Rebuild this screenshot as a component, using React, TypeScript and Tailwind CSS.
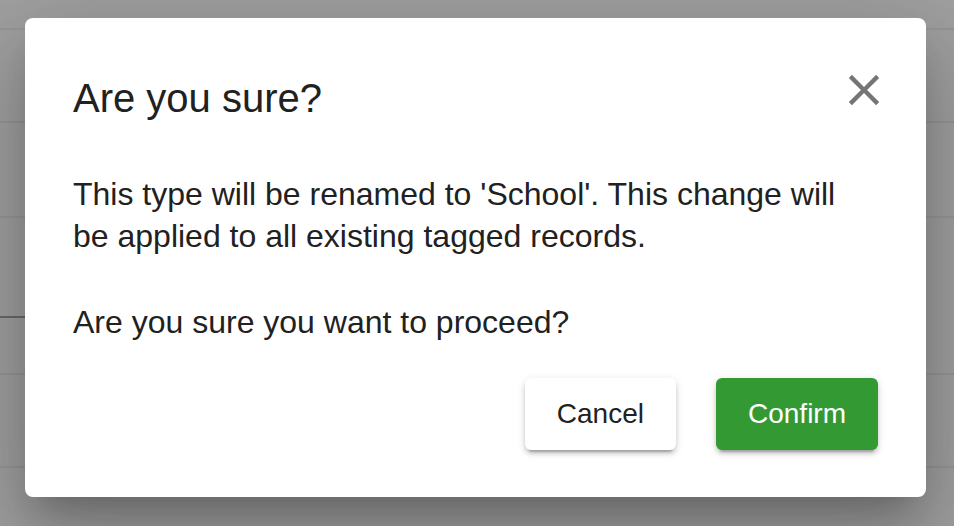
import React from 'react';

const CloseIcon: React.FC = () => (
  <svg viewBox="0 0 24 24" className="h-[52px] w-[52px]" fill="#757575">
    <path d="M19 6.41L17.59 5 12 10.59 6.41 5 5 6.41 10.59 12 5 17.59 6.41 19 12 13.41 17.59 19 19 17.59 13.41 12z" />
  </svg>
);

export default function App() {
  return (
    <div className="relative h-[526px] w-[954px] overflow-hidden bg-[#a0a0a0] font-['Liberation_Sans',Arial,sans-serif]">
      {/* page underneath the backdrop */}
      <div className="flex flex-col">
        <div className="h-[30px] border-b-2 border-[#979797]" />
        <div className="h-[93px] border-b-2 border-[#979797]" />
        <div className="h-[95px] border-b-2 border-[#979797]" />
        <div className="flex h-[100px] items-end">
          <div className="w-[200px] border-b-2 border-[#6a6a6a]" />
        </div>
        <div className="h-[57px] border-b-2 border-[#979797]" />
        <div className="h-[93px] border-b-2 border-[#979797]" />
      </div>

      {/* Dialog */}
      <div className="absolute inset-0 pl-[25px] pt-[18px]">
        <div className="w-[901px] rounded-[8px] bg-white px-[48px] pb-[47px] pt-[48px] text-[#212121] shadow-[0_22px_30px_-14px_rgba(0,0,0,0.2),0_48px_76px_6px_rgba(0,0,0,0.14),0_18px_92px_16px_rgba(0,0,0,0.12)]">
          <div className="flex items-start justify-between">
            <h2 className="text-[40px] leading-[64px]">Are you sure?</h2>
            <button className="-mr-[12px] -mt-[2px]">
              <CloseIcon />
            </button>
          </div>

          <p className="mt-[42.67px] text-[32px] leading-[42.67px]">
            This type will be renamed to 'School'. This change will be applied to all existing tagged records.
          </p>
          <p className="mt-[42.67px] text-[32px] leading-[42.67px]">Are you sure you want to proceed?</p>

          <div className="mt-[34.67px] flex justify-end gap-[40px]">
            <button className="h-[72px] rounded-[6px] bg-white px-[32px] text-[28px] text-[#212121] shadow-[0_6px_2px_-4px_rgba(0,0,0,0.2),0_4px_4px_0_rgba(0,0,0,0.14),0_2px_10px_0_rgba(0,0,0,0.12)]">
              Cancel
            </button>
            <button className="h-[72px] rounded-[6px] bg-[#339933] px-[32px] text-[28px] font-medium text-white shadow-[0_6px_2px_-4px_rgba(0,0,0,0.2),0_4px_4px_0_rgba(0,0,0,0.14),0_2px_10px_0_rgba(0,0,0,0.12)]">
              Confirm
            </button>
          </div>
        </div>
      </div>
    </div>
  );
}
